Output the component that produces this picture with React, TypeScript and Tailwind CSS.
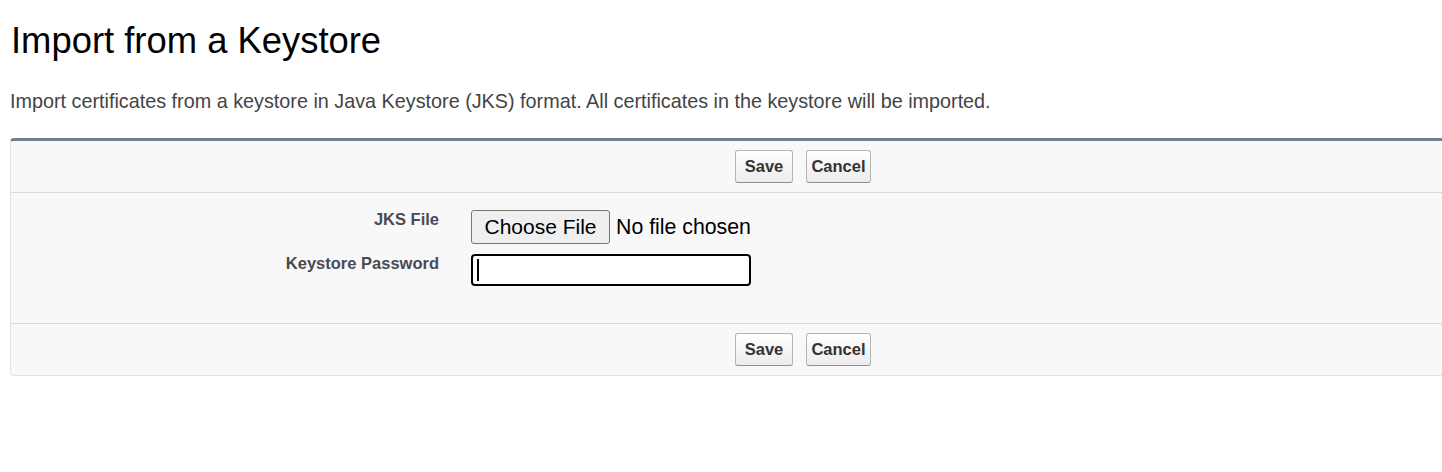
import React from 'react'

function PanelButton({ label, width }: { label: string; width: string }) {
  return (
    <button
      type="button"
      className={`h-[33px] ${width} rounded-[3px] border border-[#b5b5b5] border-b-[#8f8f8f] bg-gradient-to-b from-white to-[#ececec] text-[16.5px] font-bold leading-none text-[#333]`}
    >
      {label}
    </button>
  )
}

function ButtonBar() {
  return (
    <div className="flex justify-center gap-[13px] py-[9px]">
      <PanelButton label="Save" width="w-[58px]" />
      <PanelButton label="Cancel" width="w-[65px]" />
    </div>
  )
}

export default function App() {
  return (
    <div className="h-[472px] w-full overflow-hidden bg-white font-['Liberation_Sans',Arial,sans-serif]">
      {/* Page title */}
      <h1 className="pl-[11px] pt-[20px] text-[36.4px] leading-[42px] font-normal text-black">
        Import from a Keystore
      </h1>
      <p className="mt-[27px] pl-[10px] text-[19.8px] leading-[24px] text-[#444]">
        Import certificates from a keystore in Java Keystore (JKS) format. All certificates in the keystore will be imported.
      </p>

      {/* Edit panel */}
      <div className="mt-[25px] ml-[10px] w-[1586px] rounded-[4px] border border-[#e0e3e5] border-t-[3px] border-t-[#737e96] bg-[#f8f8f8]">
        <div className="border-b border-[#dbdbdb]">
          <ButtonBar />
        </div>

        <div className="flex flex-col gap-[10px] border-b border-[#dbdbdb] pt-[17px] pb-[37px]">
          <div className="flex">
            <label className="w-[430px] pr-[2px] text-right text-[16.5px] leading-[18px] font-bold text-[#4a4a56]">
              JKS File
            </label>
            <div className="ml-[30px] flex items-center">
              <button
                type="button"
                className="h-[34px] w-[139px] rounded-[3px] border border-[#767676] bg-[#efefef] pb-[2px] text-[21px] leading-none text-black"
              >
                Choose File
              </button>
              <span className="ml-[6px] mt-[2px] text-[21.3px] leading-none text-black">No file chosen</span>
            </div>
          </div>
          <div className="flex">
            <label className="w-[430px] pr-[2px] text-right text-[16.5px] leading-[18px] font-bold text-[#4a4a56]">
              Keystore Password
            </label>
            <div className="ml-[30px] flex h-[32px] w-[280px] items-center rounded-[4px] border-2 border-black bg-white pl-[4px]">
              <span className="h-[22px] w-[2px] bg-black" />
            </div>
          </div>
        </div>

        <ButtonBar />
      </div>
    </div>
  )
}
